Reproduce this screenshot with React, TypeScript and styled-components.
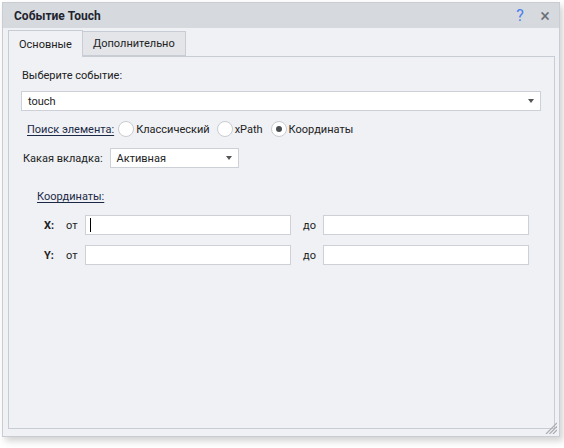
import React from "react";
import styled, { createGlobalStyle } from "styled-components";

const Global = createGlobalStyle`
  html, body { margin: 0; padding: 0; background: #ffffff; }
  body { font-family: Roboto, "Liberation Sans", sans-serif; font-size: 11px; color: #222; }
  * { box-sizing: border-box; }
`;

const Page = styled.div`
  width: 564px;
  height: 448px;
  padding: 2px 0 0 2px;
`;

const Window = styled.div`
  position: relative;
  width: 558px;
  height: 435px;
  background: #eff1f5;
  border: 1px solid #c9ccd1;
  box-shadow: 3px 4px 7px rgba(0, 0, 0, 0.18);
  display: flex;
  flex-direction: column;
`;

const TitleBar = styled.div`
  height: 25px;
  background: #d6d9dd;
  display: flex;
  align-items: center;
  padding: 0 0 0 11px;
`;

const Title = styled.div`
  font-weight: bold;
  font-size: 12px;
  color: #1e2430;
  flex: 1;
`;

const TitleButton = styled.div<{ $color: string; $size: number }>`
  width: 22px;
  text-align: center;
  color: ${(p) => p.$color};
  font-size: ${(p) => p.$size}px;
  line-height: 20px;
  margin-right: 3px;
`;

const Body = styled.div`
  flex: 1;
  display: flex;
  flex-direction: column;
  padding: 2px 2px 7px 5px;
`;

const Tabs = styled.div`
  display: flex;
  height: 26px;
  align-items: flex-end;
`;

const Tab = styled.div<{ $active?: boolean }>`
  height: ${(p) => (p.$active ? 27 : 25)}px;
  padding: 0 10px;
  display: flex;
  align-items: center;
  font-size: 11px;
  border: 1px solid #c8ccd4;
  border-bottom: ${(p) => (p.$active ? "none" : "1px solid #c8ccd4")};
  border-left: ${(p) => (p.$active ? "1px solid #c8ccd4" : "none")};
  background: ${(p) => (p.$active ? "#eff1f5" : "#e3e5e9")};
  color: #222;
  margin-bottom: ${(p) => (p.$active ? -1 : 0)}px;
  position: relative;
  z-index: ${(p) => (p.$active ? 1 : 0)};
`;

const Panel = styled.div`
  flex: 1;
  border: 1px solid #c8ccd4;
  margin-right: 2px;
  padding: 11px 13px 0 12px;
  display: flex;
  flex-direction: column;
`;

const Label = styled.div`
  line-height: 16px;
  padding-left: 1px;
`;

const Select = styled.div`
  margin-top: 7px;
  height: 20px;
  background: #fff;
  border: 1px solid #cdd0d6;
  display: flex;
  align-items: center;
  padding: 0 0 0 6px;
`;

const SelectText = styled.div`
  flex: 1;
`;

const Arrow = styled.div`
  width: 0;
  height: 0;
  border-left: 3.5px solid transparent;
  border-right: 3.5px solid transparent;
  border-top: 4px solid #555;
  margin-right: 6px;
`;

const RadioRow = styled.div`
  margin-top: 10px;
  display: flex;
  align-items: center;
  height: 16px;
  padding-left: 6px;
`;

const LinkLabel = styled.span`
  color: #1b2946;
  text-decoration: underline;
  text-underline-offset: 2px;
`;

const Radio = styled.span<{ $checked?: boolean }>`
  width: 16px;
  height: 16px;
  border-radius: 50%;
  border: 1px solid #c8cbd0;
  background: #fff;
  display: inline-flex;
  align-items: center;
  justify-content: center;
  margin-right: 2px;
  &::after {
    content: "";
    width: 6px;
    height: 6px;
    border-radius: 50%;
    background: ${(p) => (p.$checked ? "#4a4d52" : "transparent")};
  }
`;

const RadioItem = styled.span<{ $ml: number }>`
  display: inline-flex;
  align-items: center;
  margin-left: ${(p) => p.$ml}px;
`;

const TabRow = styled.div`
  margin-top: 11px;
  display: flex;
  align-items: center;
  padding-left: 2px;
`;

const SmallSelect = styled(Select)`
  margin-top: 0;
  width: 129px;
  margin-left: 7px;
`;

const Section = styled.div`
  margin-top: 21px;
  padding-left: 16px;
  line-height: 16px;
`;

const CoordRow = styled.div<{ $mt: number }>`
  margin-top: ${(p) => p.$mt}px;
  display: flex;
  align-items: center;
  height: 20px;
`;

const Axis = styled.span`
  font-weight: bold;
  width: 22px;
  margin-left: 23px;
`;

const Word = styled.span<{ $w: number }>`
  width: ${(p) => p.$w}px;
`;

const Input = styled.div`
  width: 206px;
  height: 20px;
  background: #fff;
  border: 1px solid #cdd0d6;
  display: flex;
  align-items: center;
  padding-left: 4px;
`;

const Caret = styled.div`
  width: 1px;
  height: 14px;
  background: #000;
`;

const Spacer = styled.div`
  width: 12px;
`;

const Grip = styled.svg`
  position: absolute;
  right: 2px;
  bottom: 2px;
`;

export default function App() {
  return (
    <>
      <Global />
      <Page>
        <Window>
          <TitleBar>
            <Title>Событие Touch</Title>
            <TitleButton $color="#4a7ef2" $size={16}>?</TitleButton>
            <TitleButton $color="#6b6f78" $size={18}>×</TitleButton>
          </TitleBar>
          <Body>
            <Tabs>
              <Tab $active>Основные</Tab>
              <Tab>Дополнительно</Tab>
            </Tabs>
            <Panel>
              <Label>Выберите событие:</Label>
              <Select>
                <SelectText>touch</SelectText>
                <Arrow />
              </Select>
              <RadioRow>
                <LinkLabel>Поиск элемента:</LinkLabel>
                <RadioItem $ml={4}>
                  <Radio />
                  Классический
                </RadioItem>
                <RadioItem $ml={7}>
                  <Radio />
                  xPath
                </RadioItem>
                <RadioItem $ml={8}>
                  <Radio $checked />
                  Координаты
                </RadioItem>
              </RadioRow>
              <TabRow>
                <span>Какая вкладка:</span>
                <SmallSelect>
                  <SelectText>Активная</SelectText>
                  <Arrow />
                </SmallSelect>
              </TabRow>
              <Section>
                <LinkLabel>Координаты:</LinkLabel>
              </Section>
              <CoordRow $mt={10}>
                <Axis>X:</Axis>
                <Word $w={19}>от</Word>
                <Input>
                  <Caret />
                </Input>
                <Spacer />
                <Word $w={20}>до</Word>
                <Input />
              </CoordRow>
              <CoordRow $mt={10}>
                <Axis>Y:</Axis>
                <Word $w={19}>от</Word>
                <Input />
                <Spacer />
                <Word $w={20}>до</Word>
                <Input />
              </CoordRow>
            </Panel>
          </Body>
          <Grip width="12" height="12" viewBox="0 0 12 12">
            <g stroke="#a9acb1" strokeWidth="1.2">
              <line x1="12" y1="1" x2="1" y2="12" />
              <line x1="12" y1="4.5" x2="4.5" y2="12" />
              <line x1="12" y1="8" x2="8" y2="12" />
            </g>
          </Grip>
        </Window>
      </Page>
    </>
  );
}
